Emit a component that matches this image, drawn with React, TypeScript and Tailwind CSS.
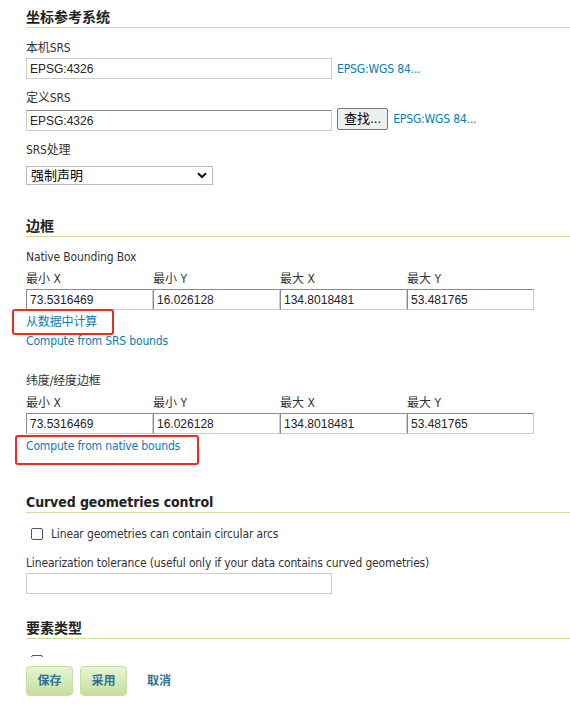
import React from 'react';

const font = {
  fontFamily: '"DejaVu Sans Condensed", "Noto Sans CJK SC", sans-serif',
};

function Heading({ children, className = '' }: { children: React.ReactNode; className?: string }) {
  return (
    <h3
      className={`h-[21px] leading-[20px] text-[14px] font-bold text-[#222] border-b border-[#c6e099] ${className}`}
    >
      {children}
    </h3>
  );
}

function Label({ children, className = '' }: { children: React.ReactNode; className?: string }) {
  return (
    <div className={`h-[16px] leading-[16px] text-[12px] tracking-[-0.15px] text-[#333] ${className}`}>
      {children}
    </div>
  );
}

function TextInput({ value, className = '' }: { value: string; className?: string }) {
  return (
    <input
      readOnly
      value={value}
      className={`h-[21px] border border-[#ccc] px-[3px] text-[12px] text-[#222] outline-none ${className}`}
      style={{ fontFamily: '"Liberation Sans", Arial, sans-serif' }}
    />
  );
}

function BoundsRow({ values }: { values: string[] }) {
  const labels = ['最小 X', '最小 Y', '最大 X', '最大 Y'];
  return (
    <div className="mt-[6px]">
      <div className="flex">
        {labels.map((l) => (
          <div key={l} className="w-[127px] h-[16px] leading-[16px] text-[12px] text-[#333]">
            {l}
          </div>
        ))}
      </div>
      <div className="flex mt-[2px]">
        {values.map((v) => (
          <input
            key={v}
            readOnly
            value={v}
            className="w-[127px] h-[21px] border border-[#ccc] border-t-[#8a8a8a] border-l-[#8a8a8a] px-[3px] text-[12px] text-[#222] outline-none"
            style={{ fontFamily: '"Liberation Sans", Arial, sans-serif' }}
          />
        ))}
      </div>
    </div>
  );
}

const link = 'text-[12px] tracking-[-0.15px] text-[#0a7cb3] leading-[16px]';

export default function App() {
  const bounds = ['73.5316469', '16.026128', '134.8018481', '53.481765'];

  return (
    <div className="min-h-screen bg-white pl-[26px] pt-[7px] pb-[30px]" style={font}>
      <Heading>坐标参考系统</Heading>

      <Label className="mt-[12px]">本机SRS</Label>
      <div className="flex items-center mt-[2px]">
        <TextInput value="EPSG:4326" className="w-[306px]" />
        <a className={`${link} ml-[5px]`}>EPSG:WGS 84...</a>
      </div>

      <Label className="mt-[11px]">定义SRS</Label>
      <div className="flex items-center mt-[1px] h-[24px]">
        <TextInput value="EPSG:4326" className="w-[306px] border-t-[#8a8a8a] mt-[3px]" />
        <button className="ml-[5px] h-[22px] px-[6px] border border-[#767676] rounded-[2px] bg-[#efefef] text-[13px] text-black leading-[20px]">
          查找...
        </button>
        <a className={`${link} ml-[5px]`}>EPSG:WGS 84...</a>
      </div>

      <Label className="mt-[11px]">SRS处理</Label>
      <div className="relative w-[187px] h-[19px] mt-[8px] border border-[#bbb] bg-white">
        <span className="absolute left-[4px] top-0 leading-[17px] text-[13px] text-black">强制声明</span>
        <svg className="absolute right-[5px] top-[5px]" width="10" height="7" viewBox="0 0 10 7">
          <path d="M1 1.2 L5 5 L9 1.2" fill="none" stroke="#111" strokeWidth="2" />
        </svg>
      </div>

      <Heading className="mt-[31px]">边框</Heading>
      <Label className="mt-[12px]">Native Bounding Box</Label>
      <BoundsRow values={bounds} />
      <div className="relative mt-[4px] w-fit h-[16px] leading-[16px]">
        <a className={`${link} block`}>从数据中计算</a>
        <div className="absolute left-[-14px] top-[-5px] w-[102px] h-[26px] border-2 border-[#ee2a24] rounded-[3px]" />
      </div>
      <div className="mt-[3px] h-[16px] leading-[16px]">
        <a className={`${link} block`}>Compute from SRS bounds</a>
      </div>

      <Label className="mt-[24px]">纬度/经度边框</Label>
      <BoundsRow values={bounds} />
      <div className="relative mt-[4px] w-fit h-[16px] leading-[16px]">
        <a className={`${link} block`}>Compute from native bounds</a>
        <div className="absolute left-[-11px] top-[-3px] w-[184px] h-[30px] border-2 border-[#ee2a24] rounded-[3px]" />
      </div>

      <Heading className="mt-[38px] tracking-[-0.1px]">Curved geometries control</Heading>
      <div className="flex items-center mt-[13px] h-[16px] pl-[5px]">
        <span className="w-[12px] h-[12px] border border-[#555] rounded-[2px] bg-white" />
        <span className="ml-[8px] text-[12px] tracking-[-0.15px] text-[#333] leading-[16px]">
          Linear geometries can contain circular arcs
        </span>
      </div>
      <Label className="mt-[13px]">Linearization tolerance (useful only if your data contains curved geometries)</Label>
      <TextInput value="" className="w-[306px] mt-[2px] block" />

      <Heading className="mt-[24px]">要素类型</Heading>
      <div className="flex items-center mt-[14px] h-[16px] pl-[5px]">
        <span className="w-[12px] h-[12px] border border-[#555] rounded-[2px] bg-white" />
      </div>

      <div className="fixed bottom-0 left-0 right-0 h-[47px] bg-white flex items-start pl-[26px] pt-[9px]">
        <button className="w-[47px] h-[30px] rounded-[4px] border border-[#c5dea1] bg-gradient-to-b from-[#e8f4d3] to-[#c4df9c] text-[12px] font-bold text-[#2b7296]">
          保存
        </button>
        <button className="ml-[7px] w-[47px] h-[30px] rounded-[4px] border border-[#c5dea1] bg-gradient-to-b from-[#e8f4d3] to-[#c4df9c] text-[12px] font-bold text-[#2b7296]">
          采用
        </button>
        <a className="ml-[20px] leading-[30px] text-[12px] font-bold text-[#2b7296]">取消</a>
      </div>
    </div>
  );
}
